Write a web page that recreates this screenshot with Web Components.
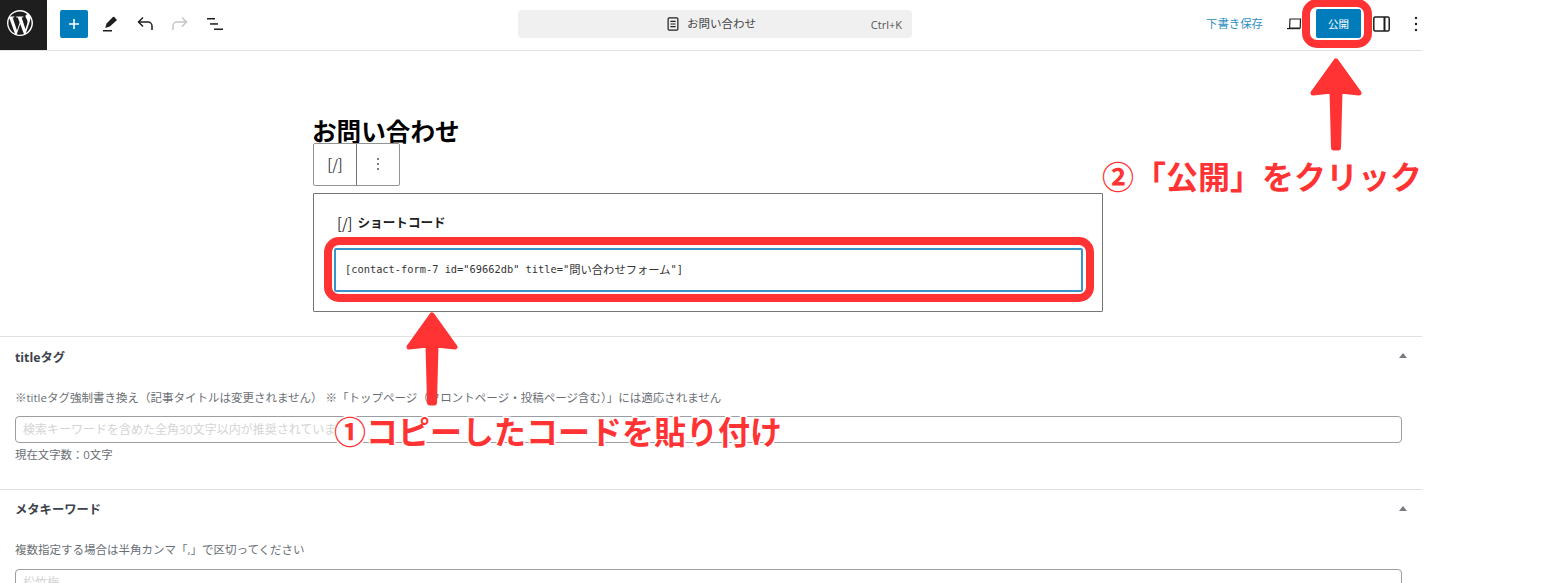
<!DOCTYPE html>
<html lang="ja">
<head>
<meta charset="utf-8">
<title>お問い合わせ</title>
<style>
  html, body { margin: 0; height: 583px; overflow: hidden; background: #fff; }
  body { font-family: "Open Sans", "Noto Sans CJK JP", sans-serif; color: #1e1e1e; }
</style>
</head>
<body>
<editor-page>
  <editor-topbar slot="top" doc-title="お問い合わせ"></editor-topbar>
  <block-canvas slot="canvas" post-title="お問い合わせ" code-start='[contact-form-7 id="69662db" title="' code-name="問い合わせフォーム" code-end='"]'></block-canvas>
  <meta-panel slot="panels" style="--panel-h:153px;--head-h:39px;--hint-gap:13px;--field-gap:9px" heading="titleタグ" hint="※titleタグ強制書き換え（記事タイトルは変更されません） ※「トップページ（フロントページ・投稿ページ含む）」には適応されません" placeholder="検索キーワードを含めた全角30文字以内が推奨されています" counter="現在文字数：0文字"></meta-panel>
  <meta-panel slot="panels" style="--panel-h:94px;--head-h:38px;--hint-gap:13px;--field-gap:10px" heading="メタキーワード" hint="複数指定する場合は半角カンマ「,」で区切ってください" placeholder="松竹梅"></meta-panel>

  <!-- annotations on top of the screenshot -->
  <mark-box style="left:324px;top:237px;width:770px;height:65px"></mark-box>
  <mark-box style="left:1302px;top:-1px;width:70px;height:49px"></mark-box>
  <mark-arrow style="left:405px;top:311px;height:95px"></mark-arrow>
  <mark-arrow style="left:1309px;top:57px;height:94px"></mark-arrow>
  <mark-label style="left:334px;top:408px"><span style="background:radial-gradient(circle 15px at 50% 52%, #fff 99%, transparent)">①</span>コピーしたコードを貼り付け</mark-label>
  <mark-label style="left:1102px;top:153px">②「公開」をクリック</mark-label>
</editor-page>

<script>
const JP = '"Open Sans", "Noto Sans CJK JP", sans-serif';

class EditorPage extends HTMLElement {
  constructor() {
    super();
    this.attachShadow({ mode: 'open' }).innerHTML = `
      <style>
        :host { display: block; position: relative; width: 1554px; height: 583px; overflow: hidden; }
        .app { width: 1422px; display: flex; flex-direction: column; }
      </style>
      <div class="app">
        <slot name="top"></slot>
        <slot name="canvas"></slot>
        <slot name="panels"></slot>
      </div>
      <slot></slot>`;
  }
}

class EditorTopbar extends HTMLElement {
  constructor() {
    super();
    const title = this.getAttribute('doc-title');
    this.attachShadow({ mode: 'open' }).innerHTML = `
      <style>
        :host { display: grid; grid-template-columns: 518px 394px 1fr; align-items: start; height: 50px; border-bottom: 1px solid #e0e0e0; box-sizing: content-box; font-family: ${JP}; }
        .left, .right { display: flex; align-items: center; height: 47px; }
        .logo { width: 47px; height: 50px; margin-bottom: -3px; padding: 0 7px 4px 0; box-sizing: border-box; background: #1e1e1e; display: flex; align-items: center; justify-content: center; }
        .add { width: 28px; height: 28px; margin-left: 13px; background: #007cba; border-radius: 2px; display: flex; align-items: center; justify-content: center; }
        .tool { width: 24px; height: 24px; margin-left: 11px; display: block; }
        .add + .tool { margin-left: 10px; }
        .cmd { margin-top: 9.5px; height: 28px; background: #f0f0f0; border-radius: 4px; position: relative; display: flex; align-items: center; justify-content: center; gap: 5px; padding-right: 10px; font-size: 11.5px; line-height: 16px; color: #444; }
        .cmd .key { position: absolute; right: 10px; top: 7px; font-size: 11px; color: #555; line-height: 16px; }
        .save { margin-left: 294px; font-size: 11.4px; line-height: 16px; color: #2f8fc4; white-space: nowrap; width: 57px; }
        .laptop { margin-left: 24px; }
        .pub { margin-left: 13px; width: 45px; height: 29px; background: #007cba; color: #fff; font-size: 10.5px; border-radius: 2px; display: flex; align-items: center; justify-content: center; }
        .panel { margin-left: 12px; }
        .dots { margin-left: 24px; }
      </style>
      <div class="left">
        <div class="logo">
          <svg width="30" height="30" viewBox="0 0 24 24" fill="#fff"><path d="M12 1.6C6.3 1.6 1.6 6.3 1.6 12S6.3 22.4 12 22.4 22.4 17.7 22.4 12 17.7 1.6 12 1.6zM2.7 12c0-1.3.3-2.6.8-3.8l4.4 12.2C4.7 18.9 2.7 15.7 2.7 12zm9.3 9.3c-.9 0-1.8-.1-2.6-.4l2.8-8.1 2.9 7.9c0 .1 0 .1.1.1-1 .3-2 .5-3.2.5zm1.3-13.7c.6 0 1.1-.1 1.1-.1.5-.1.5-.9-.1-.8 0 0-1.5.1-2.5.1-.9 0-2.5-.1-2.5-.1-.5 0-.6.8-.1.8 0 0 .5.1 1 .1l1.5 4-2.1 6.3-3.5-10.3c.6 0 1.1-.1 1.1-.1.5-.1.5-.9-.1-.8 0 0-1.5.1-2.5.1h-.6C6.1 3.9 8.9 2.7 12 2.7c2.3 0 4.4.9 6 2.3h-.1c-.9 0-1.5.8-1.5 1.6 0 .7.4 1.3.9 2.1.3.6.7 1.3.7 2.4 0 .7-.3 1.6-.7 2.8l-.9 3-3.1-9.3zm3.4 12.4l2.8-8.2c.5-1.3.7-2.3.7-3.2 0-.3 0-.6-.1-.9.7 1.3 1.1 2.8 1.1 4.3 0 3.4-1.9 6.4-4.5 8z"/></svg>
        </div>
        <div class="add"><svg width="14" height="14" viewBox="0 0 14 14"><path d="M7 2v10M2 7h10" stroke="#fff" stroke-width="1.6"/></svg></div>
        <svg class="tool" viewBox="0 0 24 24" fill="#1e1e1e"><path d="M18.6 7.4 16.3 5a1 1 0 0 0-1.4 0L8.6 11.4 7.2 16l4.6-1.4 6.8-6z"/><rect x="5" y="18" width="9" height="1.5"/></svg>
        <svg class="tool" viewBox="0 0 24 24" fill="none" stroke="#1e1e1e" stroke-width="1.5"><path d="M19 18v-4a4 4 0 0 0-4-4H6"/><path d="M10 5.5 5.5 10l4.5 4.5"/></svg>
        <svg class="tool" viewBox="0 0 24 24" fill="none" stroke="#c4c4c4" stroke-width="1.5"><path d="M5 18v-4a4 4 0 0 1 4-4h9"/><path d="M14 5.5 18.5 10 14 14.5"/></svg>
        <svg class="tool" viewBox="0 0 24 24" fill="#1e1e1e"><rect x="4" y="6" width="8" height="1.5"/><rect x="7" y="11.2" width="8" height="1.5"/><rect x="11" y="16.5" width="9" height="1.5"/></svg>
      </div>
      <div class="cmd">
        <svg width="18" height="18" viewBox="0 0 24 24" fill="none" stroke="#1e1e1e" stroke-width="1.6"><rect x="5.5" y="3.8" width="13" height="16.4" rx="1.5"/><path d="M8.5 8.5h7M8.5 12h7M8.5 15.5h7"/></svg>
        <span>${title}</span>
        <span class="key">Ctrl+K</span>
      </div>
      <div class="right">
        <span class="save">下書き保存</span>
        <svg class="laptop" width="16" height="14" viewBox="0 0 16 14" fill="none" stroke="#1e1e1e" stroke-width="1.2"><path d="M3 2h10.5l-.3 9H2.6z"/><path d="M0 11.6h13"/></svg>
        <div class="pub">公開</div>
        <svg class="panel" width="17" height="16" viewBox="0 0 17 16" fill="none" stroke="#1e1e1e" stroke-width="1.5"><rect x=".8" y="1" width="15.4" height="14" rx="1.5"/><path d="M11.5 1v14" stroke-width="2"/></svg>
        <svg class="dots" width="4" height="16" viewBox="0 0 4 16" fill="#1e1e1e"><circle cx="2" cy="2" r="1.2"/><circle cx="2" cy="8" r="1.2"/><circle cx="2" cy="14" r="1.2"/></svg>
      </div>`;
  }
}

class BlockCanvas extends HTMLElement {
  constructor() {
    super();
    const root = this.attachShadow({ mode: 'open' });
    root.innerHTML = `
      <style>
        :host { display: block; height: 285px; padding-left: 313px; box-sizing: border-box; font-family: ${JP}; }
        h1 { margin: 0 0 0 -1px; padding-top: 67px; font-size: 24.6px; line-height: 28px; height: 25px; font-weight: 700; color: #000; white-space: nowrap; position: relative; }
        .toolbar { display: inline-flex; height: 41px; border: 1px solid #949494; border-radius: 2px; background: #fff; vertical-align: top; position: relative; }
        .toolbar > div { width: 42px; display: flex; align-items: center; justify-content: center; font: 14.5px/20px "Noto Sans CJK JP", sans-serif; color: #333; padding-bottom: 2px; box-sizing: border-box; }
        .toolbar > div + div { width: 43px; border-left: 1px solid #757575; }
        .block { margin-top: 7px; width: 790px; height: 119px; border: 1px solid #757575; border-radius: 1px; box-sizing: border-box; padding: 19px 19px 0 20px; }
        .label { font-size: 12.6px; font-weight: 700; line-height: 20px; color: #1e1e1e; margin-left: 3px; white-space: pre; display: flex; gap: 5px; }
        .label b { font: 400 14.5px/20px "Noto Sans CJK JP", sans-serif; color: #222; }
        .code { margin-top: 15px; height: 44px; box-sizing: border-box; border: 2px solid #3a94c8; border-radius: 2px; padding: 0 9px 3px; display: flex; align-items: center; font: 10.35px/16px "DejaVu Sans Mono", "Noto Sans CJK JP", monospace; color: #333; white-space: pre; }
        .code span { font: 11.3px/16px "Noto Sans CJK JP", sans-serif; }
        .code i { font-style: normal; }
      </style>
      <h1></h1>
      <div class="toolbar">
        <div>[/]</div>
        <div><svg width="4" height="14" viewBox="0 0 4 14" fill="#555"><circle cx="2" cy="2" r="1"/><circle cx="2" cy="7" r="1"/><circle cx="2" cy="12" r="1"/></svg></div>
      </div>
      <div class="block">
        <div class="label"><b>[/]</b>ショートコード</div>
        <div class="code"><i></i><span></span><i></i></div>
      </div>`;
    root.querySelector('h1').textContent = this.getAttribute('post-title');
    const parts = root.querySelectorAll('.code i');
    parts[0].textContent = this.getAttribute('code-start');
    parts[1].textContent = this.getAttribute('code-end');
    root.querySelector('.code span').textContent = this.getAttribute('code-name');
  }
}

class MetaPanel extends HTMLElement {
  constructor() {
    super();
    const root = this.attachShadow({ mode: 'open' });
    const counter = this.getAttribute('counter');
    root.innerHTML = `
      <style>
        :host { display: block; height: var(--panel-h); border-top: 1px solid #e0e0e0; box-sizing: border-box; padding: 0 20px 0 15px; font-family: ${JP}; color: #50575e; overflow: hidden; }
        .head { height: var(--head-h); display: flex; align-items: center; justify-content: space-between; font-size: 12.3px; font-weight: 700; color: #3c434a; }
        .tri { width: 0; height: 0; border: 4px solid transparent; border-bottom: 5px solid #787c82; border-top: 0; margin: 0 -5px 2px 0; }
        .hint { margin-top: var(--hint-gap); font-size: 11.5px; line-height: 18px; color: #6b6f75; white-space: nowrap; }
        .field { margin-top: var(--field-gap); height: 27px; border: 1px solid #9a9da1; border-radius: 4px; box-sizing: border-box; padding: 0 7px; font-size: 12px; line-height: 25px; color: #d4d4d4; white-space: nowrap; overflow: hidden; }
        .count { margin-top: 3px; font-size: 11.4px; line-height: 18px; color: #6b6f75; }
      </style>
      <div class="head"><span></span><i class="tri"></i></div>
      <div class="hint"></div>
      <div class="field"></div>
      ${counter ? '<div class="count"></div>' : ''}`;
    root.querySelector('.head span').textContent = this.getAttribute('heading');
    root.querySelector('.hint').textContent = this.getAttribute('hint');
    root.querySelector('.field').textContent = this.getAttribute('placeholder');
    if (counter) root.querySelector('.count').textContent = counter;
  }
}

class MarkBox extends HTMLElement {
  constructor() {
    super();
    this.attachShadow({ mode: 'open' }).innerHTML = `
      <style>
        :host { display: block; position: absolute; box-sizing: border-box; border: 8px solid #ff3333; border-radius: 15px; }
      </style>`;
  }
}

class MarkArrow extends HTMLElement {
  constructor() {
    super();
    const h = parseInt(this.style.height, 10);
    this.attachShadow({ mode: 'open' }).innerHTML = `
      <style>
        :host { display: block; position: absolute; width: 54px; }
        svg { display: block; overflow: visible; }
      </style>
      <svg width="54" height="${h}" viewBox="0 0 54 ${h}">
        <path d="M27 4 L50 36 L31 34 L29.5 ${h - 3} L24.5 ${h - 3} L23 34 L4 36 Z" fill="#ff3333" stroke="#ff3333" stroke-width="5" stroke-linejoin="round"/>
      </svg>`;
  }
}

class MarkLabel extends HTMLElement {
  constructor() {
    super();
    this.attachShadow({ mode: 'open' }).innerHTML = `
      <style>
        :host { display: block; position: absolute; font: 700 32px/44px "Noto Sans CJK JP", sans-serif; color: #ff3333; white-space: nowrap; -webkit-text-stroke: 3px #fff; paint-order: stroke fill; }
      </style>
      <slot></slot>`;
  }
}

customElements.define('editor-page', EditorPage);
customElements.define('editor-topbar', EditorTopbar);
customElements.define('block-canvas', BlockCanvas);
customElements.define('meta-panel', MetaPanel);
customElements.define('mark-box', MarkBox);
customElements.define('mark-arrow', MarkArrow);
customElements.define('mark-label', MarkLabel);
</script>
</body>
</html>
